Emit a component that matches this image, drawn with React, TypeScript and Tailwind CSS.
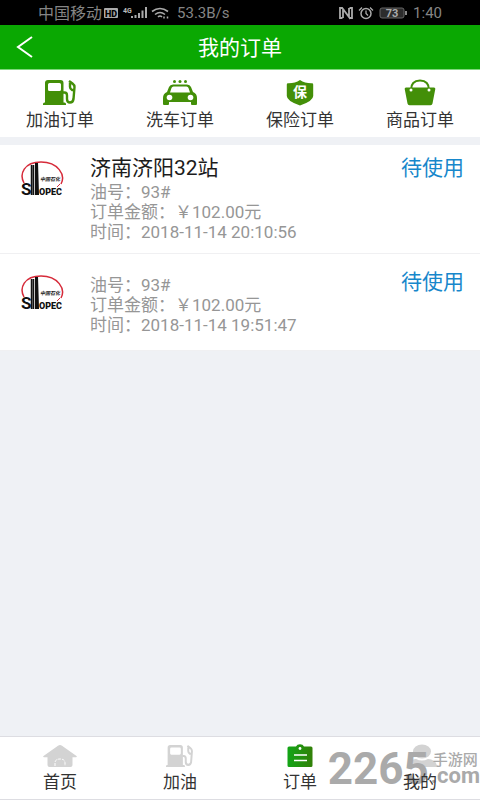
import React from "react";

const FONT = "font-['Roboto','Noto_Sans_CJK_SC',sans-serif]";

function PumpIcon({ className }: { className: string }) {
  return (
    <svg viewBox="0 0 34 27" preserveAspectRatio="none" className={className} aria-hidden="true">
      <path
        fill="currentColor"
        fillRule="evenodd"
        d="M5 1h12.500q3 0 3 3v19.500h1q1.500 0 1.500 1.500v1H0v-1q0-1.500 1.500-1.500H2V4q0-3 3-3zM5 5.500v5q0 1.500 1.500 1.500h10q1.500 0 1.500-1.500v-5q0-1.500-1.500-1.500h-10Q5 4 5 5.500z"
      />
      <path
        d="M20 13.500h1.500q2.500 0 2.500 3V20q0 3.500 3 3.500t3.500-3.500l1-12q0-2-2-3.500L26 2M27 4v4q0 2 2 3h2"
        fill="none"
        stroke="currentColor"
        strokeWidth="2.400"
      />
    </svg>
  );
}

function CarIcon() {
  return (
    <svg viewBox="0 0 34 27" className="h-[27px] w-[34px]" aria-hidden="true">
      <g fill="#438f08">
        <circle cx="11.500" cy="2.500" r="1.500" />
        <circle cx="17" cy="2.500" r="1.500" />
        <circle cx="22.500" cy="2.500" r="1.500" />
        <path
          fillRule="evenodd"
          d="M10 5.500h14q3 0 4 2.500l2 5q4 1.500 4 6v6q0 1-1 1h-4q-1 0-1-1v-2H6v2q0 1-1 1H1q-1 0-1-1v-6q0-4.500 4-6l2-5q1-2.500 4-2.500zM10.500 7.500q-1.500 0-2 1.500L7 13.500h20L25.500 9Q25 7.500 23.500 7.500z"
        />
      </g>
      <circle cx="6.500" cy="18.500" r="2.800" fill="white" />
      <circle cx="27.500" cy="18.500" r="2.800" fill="white" />
    </svg>
  );
}

function ShieldIcon() {
  return (
    <svg viewBox="0 0 34 27" className="h-[27px] w-[34px]" aria-hidden="true">
      <path
        fill="#438f08"
        d="M17 1q5 3.500 12 3.300q1.200 0 1.200 1.200v11.500q0 5-13.200 9.500Q3.800 22 3.800 17V5.500q0-1.200 1.200-1.200Q12 4.500 17 1z"
      />
      <text x="17" y="18" textAnchor="middle" fontSize="14" fontWeight="700" fill="white">
        保
      </text>
    </svg>
  );
}

function BasketIcon() {
  return (
    <svg viewBox="0 0 34 27" className="h-[27px] w-[34px]" aria-hidden="true">
      <path fill="#438f08" d="M3 8.500h28q1.500 0 1.300 1.500l-2.800 14.500q-.3 1.700-2 1.700H6.500q-1.700 0-2-1.700L1.700 10q-.2-1.500 1.300-1.500z" />
      <path d="M8 11q0-9.500 9-9.500t9 9.500" fill="none" stroke="#438f08" strokeWidth="2" />
      <circle cx="8" cy="11" r="1.500" fill="white" />
      <circle cx="26" cy="11" r="1.500" fill="white" />
    </svg>
  );
}

function HomeIcon() {
  return (
    <svg viewBox="0 0 34 24" className="h-6 w-[34px]" aria-hidden="true">
      <path
        fill="#d3d3d3"
        d="M17 1q1 0 2 .7l14.500 10.300q.8 1-.5 1.200h-3.500V21q0 2-2 2h-21q-2 0-2-2v-7.800H1q-1.300-.2-.5-1.200L15 1.700Q16 1 17 1z"
      />
      <path d="M12 22v-3q0-4 5-4t5 4v3" fill="none" stroke="white" strokeDasharray="3 1" />
    </svg>
  );
}

function ClipboardIcon() {
  return (
    <svg viewBox="0 0 26 24" className="h-6 w-[26px]" aria-hidden="true">
      <defs>
        <linearGradient id="board">
          <stop offset="0" stopColor="#12a516" />
          <stop offset="1" stopColor="#328008" />
        </linearGradient>
      </defs>
      <path fill="url(#board)" d="M2 2.500h7q1-2.200 4-2.200t4 2.200h7q1.500 0 1.500 1.500v17.500q0 1.500-1.500 1.500H2Q.5 23 .5 21.500V4Q.5 2.500 2 2.500z" />
      <circle cx="13" cy="4.500" r="1.400" fill="white" />
      <path d="M7 11h13M7 16.500h13" stroke="white" strokeWidth="1.500" />
    </svg>
  );
}

function PersonIcon() {
  return (
    <svg viewBox="0 0 34 24" className="h-6 w-[34px]" aria-hidden="true">
      <g fill="#d3d3d3">
        <ellipse cx="19" cy="7.500" rx="9" ry="7" />
        <path d="M4 23q0-7 9-8 6 3 12 0 9 1 9 8z" />
      </g>
    </svg>
  );
}

function SinopecLogo() {
  return (
    <svg viewBox="0 0 44 38" className="h-[38px] w-11 shrink-0" role="img" aria-label="SINOPEC">
      <path d="M4 23C-1 14 4 2 21 2s25 13 20 22" fill="none" stroke="#d62b3a" strokeWidth="1.500" />
      <path d="M2 25l3 3M40 24l-3 3" stroke="#d62b3a" />
      <path d="M12.500 5v30" stroke="#111" strokeWidth="3.500" />
      <path d="M12.500 5v30" stroke="#888" strokeWidth=".6" />
      <path d="M15 3h3l1 32h-4z" fill="#111" />
      <text x="1" y="35" fontSize="17" fontWeight="700" fill="#111">S</text>
      <text x="19" y="35" fontSize="9" fontWeight="900" fill="#111">OPEC</text>
      <text x="20" y="21" fontSize="5" fontWeight="700" fontStyle="italic" fill="#222">中国石化</text>
    </svg>
  );
}

function StatusBar() {
  return (
    <div className="flex h-[25px] items-center bg-black px-[38px] pt-[2px] text-[15px] leading-none text-[#858585]">
      <span className="text-base leading-none">中国移动</span>
      <svg viewBox="0 0 66 14" className="ml-[2px] h-[14px] w-[66px]" aria-hidden="true">
        <rect x="0" y="1" width="14" height="10" rx="1" fill="#aaa" />
        <text x="7" y="9.500" textAnchor="middle" fontSize="9" fontWeight="900" fill="black">HD</text>
        <text x="19" y="6" fontSize="7" fontWeight="700" fill="#bbb">4G</text>
        <path d="M28 11v-2M31.500 11V8M35 11V6M38.500 11V3.500M42 11V0" stroke="#aaa" strokeWidth="2" />
        <path d="M48 4.500q8-6 16 0M51 7.500q5-4 10 0M54 10q2-2 4 0" fill="none" stroke="#aaa" strokeWidth="1.600" />
        <path d="M60 11.500v-2M63.500 11.500v-2" stroke="#aaa" strokeWidth="1.500" />
      </svg>
      <span className="ml-[7px]">53.3B/s</span>
      <svg viewBox="0 0 70 14" className="ml-auto h-[14px] w-[70px]" aria-hidden="true">
        <path d="M4.500 1H2v10h2.500M5 11V2l6 8V1M11.500 1H14v10h-2.500" fill="none" stroke="#aaa" strokeWidth="1.800" />
        <circle cx="28" cy="6.500" r="5" fill="none" stroke="#aaa" strokeWidth="1.500" />
        <path d="M28 3.500v3l2 2M21 3.500l3-3M35 3.500l-3-3" fill="none" stroke="#aaa" strokeWidth="1.300" />
        <rect x="42" y="1" width="24" height="10" rx="2" fill="#2c2c2c" stroke="#666" />
        <path d="M68 4v4" stroke="#888" strokeWidth="2" />
        <text x="54" y="10" textAnchor="middle" fontSize="11" fontWeight="700" fill="#aaa">73</text>
      </svg>
      <span className="ml-[5px]">1:40</span>
    </div>
  );
}

const categories = [
  { label: "加油订单", icon: <PumpIcon className="h-[27px] w-[34px] text-[#438f08]" /> },
  { label: "洗车订单", icon: <CarIcon /> },
  { label: "保险订单", icon: <ShieldIcon /> },
  { label: "商品订单", icon: <BasketIcon /> },
];

const orders = [
  { station: "济南济阳32站", oil: "93#", amount: "￥102.00元", time: "2018-11-14 20:10:56" },
  { station: "", oil: "93#", amount: "￥102.00元", time: "2018-11-14 19:51:47" },
];

const tabs = [
  { label: "首页", icon: <HomeIcon /> },
  { label: "加油", icon: <PumpIcon className="h-6 w-7 text-[#d3d3d3]" /> },
  { label: "订单", icon: <ClipboardIcon /> },
  { label: "我的", icon: <PersonIcon /> },
];

export default function App() {
  return (
    <div className={`flex min-h-screen flex-col bg-[#eff1f5] ${FONT}`}>
      <StatusBar />
      <header className="grid h-[45px] grid-cols-[48px_1fr_48px] items-center border-b border-[#7fd77c] bg-[#0aa802] text-white">
        <button type="button" aria-label="返回" className="flex h-full items-center pl-4">
          <svg viewBox="0 0 18 24" className="h-6 w-[18px]" aria-hidden="true">
            <path d="M16 2L2 12l14 10" fill="none" stroke="white" strokeWidth="2" />
          </svg>
        </button>
        <h1 className="pt-[2px] text-center text-[21px] leading-6">我的订单</h1>
      </header>

      <nav className="grid h-[67px] grid-cols-4 bg-white">
        {categories.map((c) => (
          <button key={c.label} type="button" className="flex flex-col items-center gap-[2px] pt-[9px] text-[17px] leading-6 text-[#333]">
            {c.icon}
            <span>{c.label}</span>
          </button>
        ))}
      </nav>

      <main className="grow pt-2">
        <ul>
          {orders.map((o) => (
            <li
              key={o.time}
              className={`flex items-start border-b border-[#f0f0f2] bg-white pr-4 pl-5 ${o.station ? "pt-[11px] pb-[11px]" : "pt-4 pb-[15px]"}`}
            >
              <div className="pt-1">
                <SinopecLogo />
              </div>
              <div className={`grow pl-[26px] text-[17px] leading-5 text-[#969696] ${o.station ? "" : "pt-[5px]"}`}>
                {o.station && <h2 className="mb-[2px] text-[21px] leading-6 text-[#1c1c1c]">{o.station}</h2>}
                <p>油号：{o.oil}</p>
                <p>订单金额：{o.amount}</p>
                <p>时间：{o.time}</p>
              </div>
              <span className="text-[21px] leading-6 text-[#1787cb]">待使用</span>
            </li>
          ))}
        </ul>
      </main>

      <nav className="relative grid h-16 grid-cols-4 border-t border-b border-[#dddde2] bg-white">
        {tabs.map((t) => (
          <button key={t.label} type="button" className="flex flex-col items-center gap-[2px] pt-[7px] text-[17px] leading-6 text-[#333]">
            {t.icon}
            <span className="relative z-10">{t.label}</span>
          </button>
        ))}
        <div className="pointer-events-none absolute right-0 bottom-2 flex items-end font-bold text-[#aaaaaa]">
          <span className="text-[44px] leading-[44px]">2265</span>
          <span className="flex flex-col pb-[7px] pl-[2px]">
            <span className="pl-[2px] text-[15px] leading-4 font-medium">手游网</span>
            <span className="text-[22px] leading-4">.com</span>
          </span>
        </div>
      </nav>
    </div>
  );
}
